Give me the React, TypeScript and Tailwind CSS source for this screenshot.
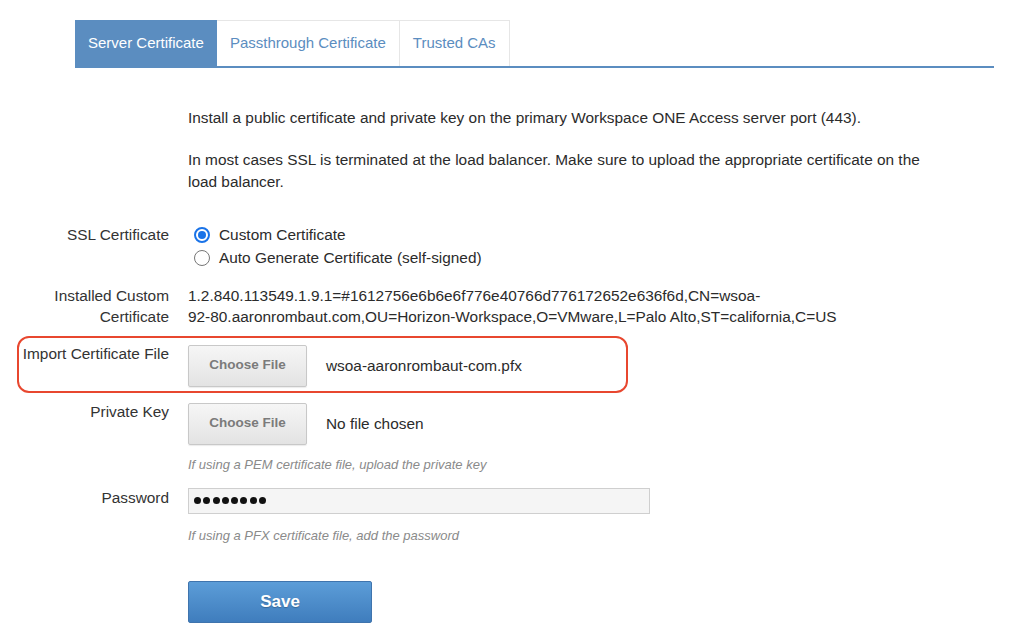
import { useState } from "react";

const tabs = ["Server Certificate", "Passthrough Certificate", "Trusted CAs"];

function Radio({ checked, label }: { checked: boolean; label: string }) {
  return (
    <label className="flex items-center h-[23px]">
      <span className="w-[35px] flex justify-center">
        {checked ? (
          <span className="w-[16px] h-[16px] rounded-full border-[2px] border-[#1a73e8] flex items-center justify-center">
            <span className="w-[8px] h-[8px] rounded-full bg-[#1a73e8]" />
          </span>
        ) : (
          <span className="w-[16px] h-[16px] rounded-full border border-[#767676]" />
        )}
      </span>
      <span>{label}</span>
    </label>
  );
}

function FileButton() {
  return (
    <button className="w-[119px] h-[42px] rounded-[2px] border border-[#c8c8c8] bg-gradient-to-b from-[#f6f6f6] to-[#e3e3e3] text-[13.5px] font-bold text-[#7b7b7b] shadow-[0_1px_1px_rgba(0,0,0,0.08)]">
      Choose File
    </button>
  );
}

export default function App() {
  const [active, setActive] = useState(0);

  return (
    <div className="min-h-screen bg-white font-['Liberation_Sans',Arial,sans-serif] text-[15.4px] text-[#2b2b2b]">
      {/* Tabs */}
      <div className="pl-[75px] pt-[20px]">
        <div className="w-[919px] flex border-b-2 border-[#5b8dc0]">
          {tabs.map((t, i) => (
            <button
              key={t}
              onClick={() => setActive(i)}
              className={`h-[46px] px-[13px] text-[15px] ${
                active === i
                  ? "bg-[#5b8dc0] text-white"
                  : "border-t border-r border-[#e6e6e6] text-[#5b8dc0]"
              }`}
            >
              {t}
            </button>
          ))}
        </div>
      </div>

      {/* Intro */}
      <div className="pl-[188px] pr-[90px] leading-[22px] mt-[39px]">
        <p>
          Install a public certificate and private key on the primary Workspace ONE Access server port (443).
        </p>
        <p className="mt-[20px]">
          In most cases SSL is terminated at the load balancer. Make sure to upload the appropriate certificate on the
          load balancer.
        </p>
      </div>

      {/* SSL Certificate */}
      <div className="flex mt-[31px]">
        <div className="w-[169px] text-right leading-[22px] text-[#333]">SSL Certificate</div>
        <div className="ml-[19px] -mt-[0.5px] flex flex-col">
          <div className="-ml-[4px]">
            <Radio checked label="Custom Certificate" />
            <Radio checked={false} label="Auto Generate Certificate (self-signed)" />
          </div>
        </div>
      </div>

      {/* Installed */}
      <div className="flex mt-[15px] leading-[21px]">
        <div className="w-[169px] text-right text-[#333]">
          Installed Custom
          <br />
          Certificate
        </div>
        <div className="ml-[19px] w-[700px]">
          1.2.840.113549.1.9.1=#1612756e6b6e6f776e40766d776172652e636f6d,CN=wsoa-
          <br />
          92-80.aaronrombaut.com,OU=Horizon-Workspace,O=VMware,L=Palo Alto,ST=california,C=US
        </div>
      </div>

      {/* Import Certificate File */}
      <div className="relative flex items-start mt-[16px]">
        <div className="absolute left-[17px] top-[-7px] w-[611px] h-[57px] rounded-[12px] border-[2.5px] border-[#e8472f] pointer-events-none" />
        <div className="w-[169px] text-right leading-[22px] text-[#333]">Import Certificate File</div>
        <div className="ml-[19px] mt-[2px] flex items-center">
          <FileButton />
          <span className="ml-[19px]">wsoa-aaronrombaut-com.pfx</span>
        </div>
      </div>

      {/* Private Key */}
      <div className="flex items-start mt-[14px]">
        <div className="w-[169px] text-right leading-[22px] text-[#333]">Private Key</div>
        <div className="ml-[19px] mt-[2px]">
          <div className="flex items-center">
            <FileButton />
            <span className="ml-[19px]">No file chosen</span>
          </div>
          <div className="mt-[12px] text-[13px] leading-[16px] italic text-[#8a8a8a]">
            If using a PEM certificate file, upload the private key
          </div>
        </div>
      </div>

      {/* Password */}
      <div className="flex items-start mt-[14px]">
        <div className="w-[169px] text-right leading-[22px] text-[#333]">Password</div>
        <div className="ml-[19px] mt-[1px]">
          <div className="w-[462px] h-[26px] border border-[#cfcfcf] bg-[#f5f5f5] flex items-center pl-[5px] gap-[2.3px]">
            {Array.from({ length: 8 }).map((_, i) => (
              <span key={i} className="w-[7px] h-[7px] rounded-full bg-[#111]" />
            ))}
          </div>
          <div className="mt-[14px] text-[13px] leading-[16px] italic text-[#8a8a8a]">
            If using a PFX certificate file, add the password
          </div>
          <button className="mt-[37px] w-[184px] h-[42px] rounded-[2px] border border-[#3f74ad] bg-gradient-to-b from-[#5c9dd8] to-[#3f7dbd] text-white font-bold text-[17px] [text-shadow:0_1px_1px_rgba(0,0,0,0.25)]">
            Save
          </button>
        </div>
      </div>
    </div>
  );
}
